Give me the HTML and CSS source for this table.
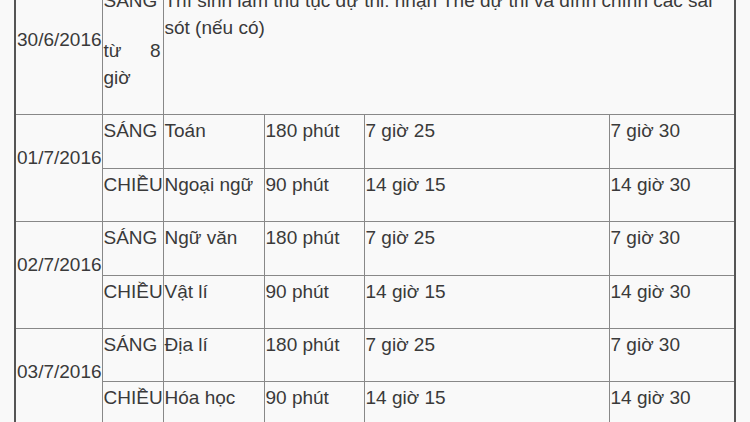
FILE: index.html
```html
<!DOCTYPE html>
<html lang="vi">
<head>
<meta charset="utf-8">
<title>Lịch thi</title>
<link rel="stylesheet" href="styles.css">
</head>
<body>
<table class="schedule">
  <colgroup>
    <col class="c-date">
    <col class="c-session">
    <col class="c-subject">
    <col class="c-duration">
    <col class="c-start">
    <col class="c-begin">
  </colgroup>
  <tbody>
    <tr>
      <td class="date"><p>30/6/2016</p></td>
      <td class="session"><p>SÁNG</p><p class="just">từ 8 giờ</p></td>
      <td colspan="4"><p>Thí sinh làm thủ tục dự thi: nhận Thẻ dự thi và đính chính các sai sót (nếu có)</p></td>
    </tr>
    <tr>
      <td class="date" rowspan="2"><p>01/7/2016</p></td>
      <td><p>SÁNG</p></td>
      <td><p>Toán</p></td>
      <td><p>180 phút</p></td>
      <td><p>7 giờ 25</p></td>
      <td><p>7 giờ 30</p></td>
    </tr>
    <tr>
      <td><p>CHIỀU</p></td>
      <td><p>Ngoại ngữ</p></td>
      <td><p>90 phút</p></td>
      <td><p>14 giờ 15</p></td>
      <td><p>14 giờ 30</p></td>
    </tr>
    <tr>
      <td class="date" rowspan="2"><p>02/7/2016</p></td>
      <td><p>SÁNG</p></td>
      <td><p>Ngữ văn</p></td>
      <td><p>180 phút</p></td>
      <td><p>7 giờ 25</p></td>
      <td><p>7 giờ 30</p></td>
    </tr>
    <tr>
      <td><p>CHIỀU</p></td>
      <td><p>Vật lí</p></td>
      <td><p>90 phút</p></td>
      <td><p>14 giờ 15</p></td>
      <td><p>14 giờ 30</p></td>
    </tr>
    <tr>
      <td class="date" rowspan="2"><p>03/7/2016</p></td>
      <td><p>SÁNG</p></td>
      <td><p>Địa lí</p></td>
      <td><p>180 phút</p></td>
      <td><p>7 giờ 25</p></td>
      <td><p>7 giờ 30</p></td>
    </tr>
    <tr>
      <td><p>CHIỀU</p></td>
      <td><p>Hóa học</p></td>
      <td><p>90 phút</p></td>
      <td><p>14 giờ 15</p></td>
      <td><p>14 giờ 30</p></td>
    </tr>
  </tbody>
</table>
</body>
</html>
```
FILE: styles.css
```css
html, body {
  margin: 0;
  padding: 0;
  background: #f9f9f9;
  overflow: hidden;
}

body {
  font-family: "Liberation Sans", Arial, sans-serif;
  font-size: 19px;
  line-height: 27px;
  color: #3a3a3a;
}

.schedule {
  border-collapse: collapse;
  table-layout: fixed;
  width: 720px;
  margin: -17px 0 0 14px;
  border: 2px solid #555;
}

.c-date { width: 87px; }
.c-session { width: 61px; }
.c-subject { width: 101px; }
.c-duration { width: 100px; }
.c-start { width: 245px; }
.c-begin { width: 126px; }

.schedule td {
  border: 1px solid #888;
  padding: 2px 2px 0.4px 1px;
  vertical-align: top;
}

.schedule td.date {
  vertical-align: middle;
}

.schedule p {
  margin: 0 0 23px;
}

.schedule .just {
  text-align: justify;
}
```
